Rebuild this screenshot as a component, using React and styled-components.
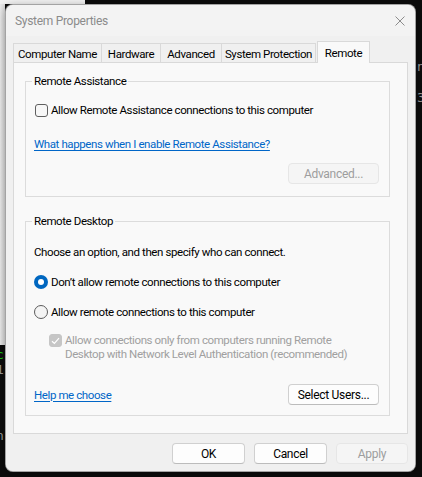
import React from "react";
import styled, { createGlobalStyle } from "styled-components";

const GlobalStyle = createGlobalStyle`
  html, body { margin: 0; padding: 0; }
  body {
    width: 422px;
    height: 477px;
    overflow: hidden;
    font-family: Roboto, "Liberation Sans", Arial, sans-serif;
    font-size: 11.5px;
    letter-spacing: -0.4px;
    color: #000;
    background:
      linear-gradient(#f2f2f2, #f2f2f2) 0 0 / 85px 4px no-repeat,
      linear-gradient(90deg, #ececec, #dcdcdc) 0 0 / 5px 345px no-repeat,
      #0c0c0c;
  }
  * { box-sizing: border-box; }
`;

const Desktop = styled.div`
  position: relative;
  width: 422px;
  height: 477px;
  padding: 4px 0 0 5px;
  overflow: hidden;
`;

const TermGlyph = styled.span`
  position: absolute;
  font-family: "DejaVu Sans Mono", monospace;
  font-size: 13px;
  line-height: 14px;
  letter-spacing: 0;
  color: ${(p) => p.color || "#cccccc"};
`;

const Window = styled.div`
  width: 411px;
  height: 468px;
  border: 1px solid rgba(0, 0, 0, 0.32);
  border-radius: 8px;
  background: #f0f0f0;
  display: flex;
  flex-direction: column;
  overflow: hidden;
  box-shadow: 0 2px 10px rgba(0, 0, 0, 0.35);
  position: relative;
`;

const TitleBar = styled.div`
  height: 31px;
  display: flex;
  align-items: center;
  justify-content: space-between;
  padding: 0 10px 0 9px;
  background: #f3f3f3;
`;

const Title = styled.span`
  color: #8b8b8b;
  font-size: 12px;
  letter-spacing: -0.3px;
`;

const CloseIcon = () => (
  <svg width="10" height="10" viewBox="0 0 10 10">
    <path d="M0.5 0.5 L9.5 9.5 M9.5 0.5 L0.5 9.5" stroke="#8c8c8c" strokeWidth="1" fill="none" />
  </svg>
);

const Content = styled.div`
  flex: 1;
  display: flex;
  flex-direction: column;
  padding: 5px 7px 0 7px;
  background: #f0f0f0;
`;

const TabStrip = styled.div`
  height: 21px;
  display: flex;
  align-items: flex-end;
  position: relative;
  z-index: 1;
`;

const Tab = styled.div`
  width: ${(p) => p.$w}px;
  height: ${(p) => (p.$active ? 22 : 19)}px;
  margin-right: -1px;
  margin-left: ${(p) => (p.$active ? 2 : 0)}px;
  margin-bottom: ${(p) => (p.$active ? -1 : 0)}px;
  border: 1px solid #d9d9d9;
  border-bottom: none;
  background: ${(p) => (p.$active ? "#f9f9f9" : "#f0f0f0")};
  display: flex;
  align-items: center;
  justify-content: center;
  padding-top: ${(p) => (p.$active ? 0 : 1)}px;
  white-space: nowrap;
  color: #000;
`;

const Panel = styled.div`
  height: 372px;
  border: 1px solid #d9d9d9;
  background: #f9f9f9;
  padding: 11px 17px 0 11px;
  display: flex;
  flex-direction: column;
`;

const Group = styled.fieldset`
  margin: ${(p) => (p.$first ? 0 : 17)}px 0 0 0;
  padding: 0 10px ${(p) => p.$pb}px 8px;
  border: 1px solid #dcdcdc;
  min-width: 0;
  display: flex;
  flex-direction: column;
`;

const Legend = styled.legend`
  padding: 0 2px;
  margin-left: -2px;
  line-height: 14px;
`;

const Row = styled.div`
  display: flex;
  align-items: center;
  gap: 3px;
  height: 14px;
  margin-top: ${(p) => p.$mt}px;
  line-height: 14px;
  white-space: nowrap;
`;

const Text = styled.div`
  line-height: 14px;
  margin-top: ${(p) => p.$mt}px;
  white-space: nowrap;
`;

const Link = styled.a`
  color: #0066c8;
  text-decoration: underline;
  text-underline-offset: 2px;
  line-height: 14px;
  cursor: pointer;
  white-space: nowrap;
`;

const LinkLine = styled.div`
  margin-top: ${(p) => p.$mt}px;
  line-height: 14px;
`;

const Box = styled.span`
  width: 13px;
  height: 13px;
  flex: 0 0 13px;
  border-radius: 3px;
  border: 1px solid ${(p) => (p.$disabled ? "#c6c6c6" : "#5f5f5f")};
  background: ${(p) => (p.$disabled ? "#c6c6c6" : "#f7f7f7")};
  margin-left: ${(p) => p.$ml || 0}px;
  display: flex;
  align-items: center;
  justify-content: center;
`;

const Radio = styled.span`
  width: 14px;
  height: 14px;
  flex: 0 0 14px;
  border-radius: 50%;
  border: ${(p) => (p.$on ? "none" : "1px solid #5c5c5c")};
  background: ${(p) => (p.$on ? "#0067c0" : "#f4f4f4")};
  display: flex;
  align-items: center;
  justify-content: center;
  &::after {
    content: "";
    display: ${(p) => (p.$on ? "block" : "none")};
    width: 6px;
    height: 6px;
    border-radius: 50%;
    background: #fff;
  }
`;

const SubOption = styled.div`
  display: flex;
  align-items: flex-start;
  gap: 3px;
  margin-top: 14px;
  padding-left: 15px;
  color: #a0a0a0;
  line-height: 14px;
  white-space: nowrap;
  & > span:first-child {
    margin-top: 1px;
  }
`;

const ButtonRow = styled.div`
  display: flex;
  justify-content: ${(p) => (p.$between ? "space-between" : "flex-end")};
  align-items: center;
  margin-top: ${(p) => p.$mt}px;
`;

const Button = styled.button`
  width: ${(p) => p.$w}px;
  height: 21px;
  padding: 0;
  font-family: inherit;
  font-size: 12px;
  letter-spacing: -0.3px;
  border-radius: 4px;
  border: 1px solid ${(p) => (p.disabled ? "#e6e6e6" : "#d0d0d0")};
  border-bottom-color: ${(p) => (p.disabled ? "#e6e6e6" : "#bcbcbc")};
  background: ${(p) => (p.disabled ? "#f5f5f5" : "#fdfdfd")};
  color: ${(p) => (p.disabled ? "#9d9d9d" : "#000")};
`;

const Footer = styled.div`
  display: flex;
  justify-content: flex-end;
  gap: 9px;
  padding-top: 9px;
`;

const Check = () => (
  <svg width="9" height="8" viewBox="0 0 9 8">
    <path d="M1 4.2 L3.4 6.5 L8 1.2" stroke="#fff" strokeWidth="1.2" fill="none" />
  </svg>
);

const tabs = [
  { label: "Computer Name", w: 89 },
  { label: "Hardware", w: 60 },
  { label: "Advanced", w: 62 },
  { label: "System Protection", w: 95 },
  { label: "Remote", w: 53, active: true },
];

export default function App() {
  return (
    <>
      <GlobalStyle />
      <Desktop>
        <TermGlyph color="#9a9a9a" style={{ left: 417, top: 60 }}>n</TermGlyph>
        <TermGlyph color="#9a9a9a" style={{ left: 417, top: 91 }}>3</TermGlyph>
        <TermGlyph color="#16c60c" style={{ left: -4, top: 348 }}>c</TermGlyph>
        <TermGlyph color="#9a9a9a" style={{ left: -4, top: 363 }}>1</TermGlyph>
        <TermGlyph color="#9a9a9a" style={{ left: -4, top: 429 }}>n</TermGlyph>
        <Window>
          <TitleBar>
            <Title>System Properties</Title>
            <CloseIcon />
          </TitleBar>
          <Content>
            <TabStrip>
              {tabs.map((t) => (
                <Tab key={t.label} $w={t.w} $active={t.active}>
                  {t.label}
                </Tab>
              ))}
            </TabStrip>
            <Panel>
              <Group $first $pb={12}>
                <Legend>Remote Assistance</Legend>
                <Row $mt={15}>
                  <Box $ml={1} />
                  <span>Allow Remote Assistance connections to this computer</span>
                </Row>
                <LinkLine $mt={20}>
                  <Link>What happens when I enable Remote Assistance?</Link>
                </LinkLine>
                <ButtonRow $mt={12}>
                  <Button $w={91} disabled>Advanced...</Button>
                </ButtonRow>
              </Group>
              <Group $pb={10}>
                <Legend>Remote Desktop</Legend>
                <Text $mt={17}>Choose an option, and then specify who can connect.</Text>
                <Row $mt={16}>
                  <Radio $on />
                  <span>Don’t allow remote connections to this computer</span>
                </Row>
                <Row $mt={16}>
                  <Radio />
                  <span>Allow remote connections to this computer</span>
                </Row>
                <SubOption>
                  <Box $disabled>
                    <Check />
                  </Box>
                  <span>
                    Allow connections only from computers running Remote
                    <br />
                    Desktop with Network Level Authentication (recommended)
                  </span>
                </SubOption>
                <ButtonRow $between $mt={23}>
                  <Link>Help me choose</Link>
                  <Button $w={91}>Select Users...</Button>
                </ButtonRow>
              </Group>
            </Panel>
            <Footer>
              <Button $w={73}>OK</Button>
              <Button $w={73}>Cancel</Button>
              <Button $w={72} disabled>Apply</Button>
            </Footer>
          </Content>
        </Window>
      </Desktop>
    </>
  );
}
